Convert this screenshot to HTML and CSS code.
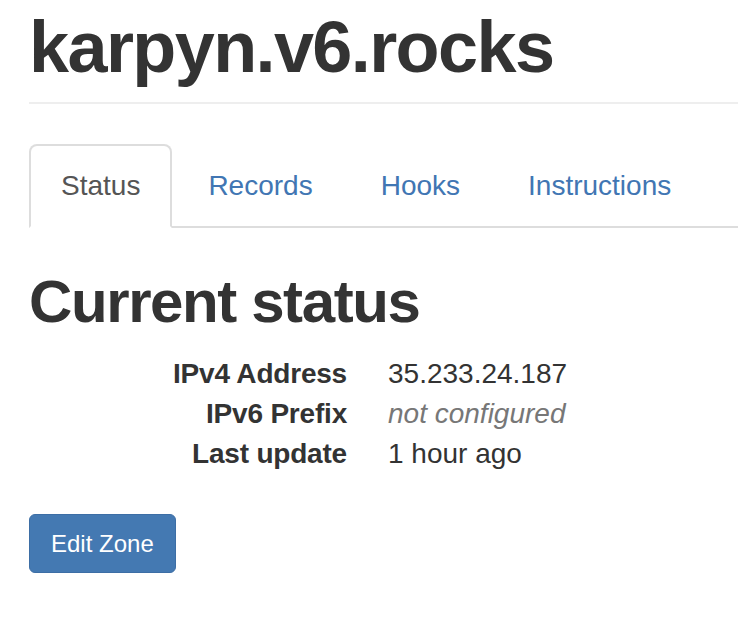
FILE: index.html
```html
<!DOCTYPE html>
<html lang="en">
<head>
<meta charset="utf-8">
<title>karpyn.v6.rocks</title>
<link rel="stylesheet" href="styles.css">
</head>
<body>
<div class="container">
  <div class="page-header">
    <h1 class="title">karpyn.v6.rocks</h1>
  </div>
  <ul class="nav-tabs">
    <li class="tab active"><a href="#">Status</a></li>
    <li class="tab"><a href="#">Records</a></li>
    <li class="tab"><a href="#">Hooks</a></li>
    <li class="tab"><a href="#">Instructions</a></li>
  </ul>
  <h2 class="section-title">Current status</h2>
  <dl class="details">
    <dt>IPv4 Address</dt>
    <dd>35.233.24.187</dd>
    <dt>IPv6 Prefix</dt>
    <dd><em class="muted">not configured</em></dd>
    <dt>Last update</dt>
    <dd>1 hour ago</dd>
  </dl>
  <a class="btn-primary" href="#">Edit Zone</a>
</div>
</body>
</html>
```

FILE: styles.css
```css
html, body {
  margin: 0;
  padding: 0;
  background: #fff;
}
body {
  font-family: "Liberation Sans", Arial, sans-serif;
  color: #333;
  font-size: 28px;
  line-height: 40px;
}
.container {
  padding-left: 29px;
  overflow: hidden;
}
.page-header {
  margin-top: 7px;
  padding-bottom: 15px;
  border-bottom: 2px solid #eee;
}
.title {
  margin: 0;
  font-size: 72px;
  line-height: 80px;
  font-weight: bold;
  letter-spacing: -1.6px;
}
.nav-tabs {
  list-style: none;
  margin: 40px 0 0 0;
  padding: 0;
  display: flex;
  border-bottom: 2px solid #ddd;
}
.tab {
  margin-right: 4px;
  margin-bottom: -2px;
}
.tab a {
  display: block;
  padding: 20px 30px;
  border: 2px solid transparent;
  border-radius: 8px 8px 0 0;
  color: #4176b3;
  text-decoration: none;
  font-size: 28px;
  line-height: 40px;
}
.tab.active a {
  color: #555;
  background: #fff;
  border-color: #ddd #ddd transparent #ddd;
}
.section-title {
  margin: 41px 0 0 0;
  font-size: 60px;
  line-height: 66px;
  font-weight: bold;
  letter-spacing: -1.4px;
}
.details {
  margin: 19px 0 0 0;
  display: grid;
  grid-template-columns: 318px auto;
  column-gap: 41px;
}
.details dt {
  text-align: right;
  font-weight: bold;
  letter-spacing: -0.2px;
}
.details dd {
  margin: 0;
}
.muted {
  color: #777;
}
.btn-primary {
  display: inline-block;
  margin-top: 40px;
  padding: 11px 21px;
  font-size: 24px;
  line-height: 35px;
  color: #fff;
  background: #4479b2;
  border: 1px solid #3d6ea5;
  border-radius: 6px;
  text-decoration: none;
}
```
